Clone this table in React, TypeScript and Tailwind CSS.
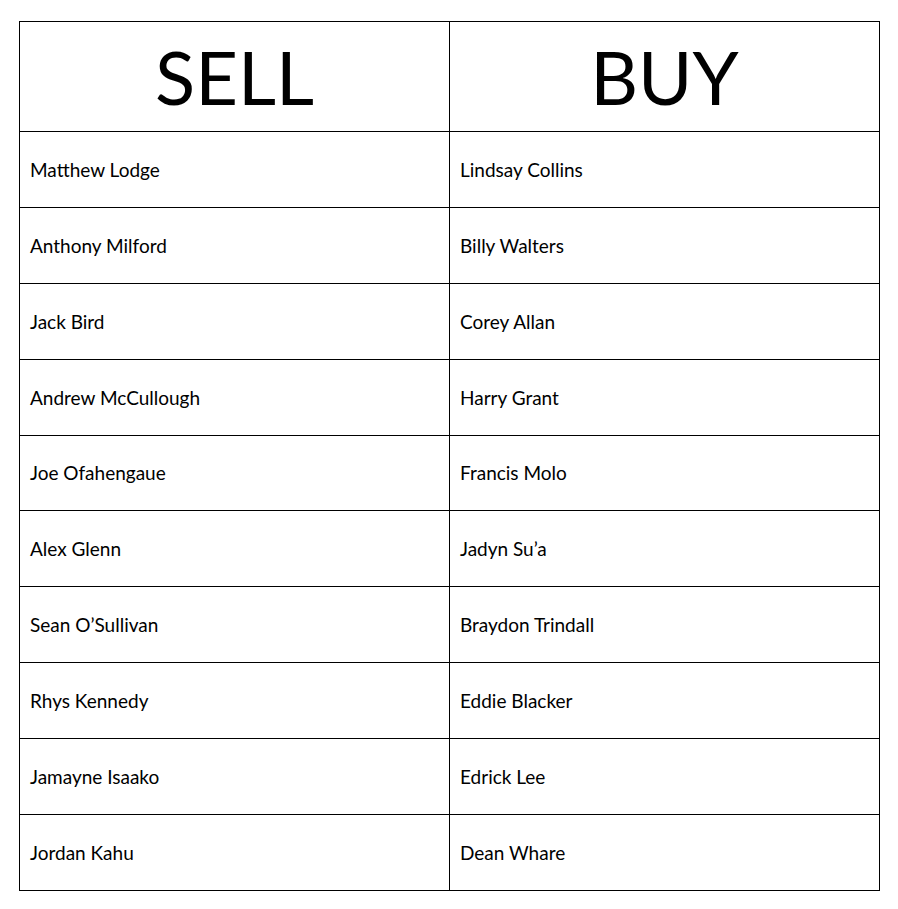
const rows: [string, string][] = [
  ["Matthew Lodge", "Lindsay Collins"],
  ["Anthony Milford", "Billy Walters"],
  ["Jack Bird", "Corey Allan"],
  ["Andrew McCullough", "Harry Grant"],
  ["Joe Ofahengaue", "Francis Molo"],
  ["Alex Glenn", "Jadyn Su’a"],
  ["Sean O’Sullivan", "Braydon Trindall"],
  ["Rhys Kennedy", "Eddie Blacker"],
  ["Jamayne Isaako", "Edrick Lee"],
  ["Jordan Kahu", "Dean Whare"],
];

export default function App() {
  return (
    <div className="w-[898px] h-[909px] bg-white pt-[21px] pl-[19px] font-['Lato',sans-serif] text-black">
      <div className="w-[861px] border-l border-t border-black">
        {/* header */}
        <div className="flex">
          {["SELL", "BUY"].map((h) => (
            <div
              key={h}
              className="w-[430px] h-[110px] border-r border-b border-black flex items-center justify-center text-[74px] leading-none"
            >
              {h}
            </div>
          ))}
        </div>

        {/* rows */}
        {rows.map(([sell, buy], i) => (
          <div key={sell} className={i === 4 ? "flex h-[75px]" : "flex h-[76px]"}>
            {[sell, buy].map((name) => (
              <div
                key={name}
                className="w-[430px] h-full border-r border-b border-black flex items-center pl-[10px] pt-[1px] text-[19px]"
              >
                {name}
              </div>
            ))}
          </div>
        ))}
      </div>
    </div>
  );
}
